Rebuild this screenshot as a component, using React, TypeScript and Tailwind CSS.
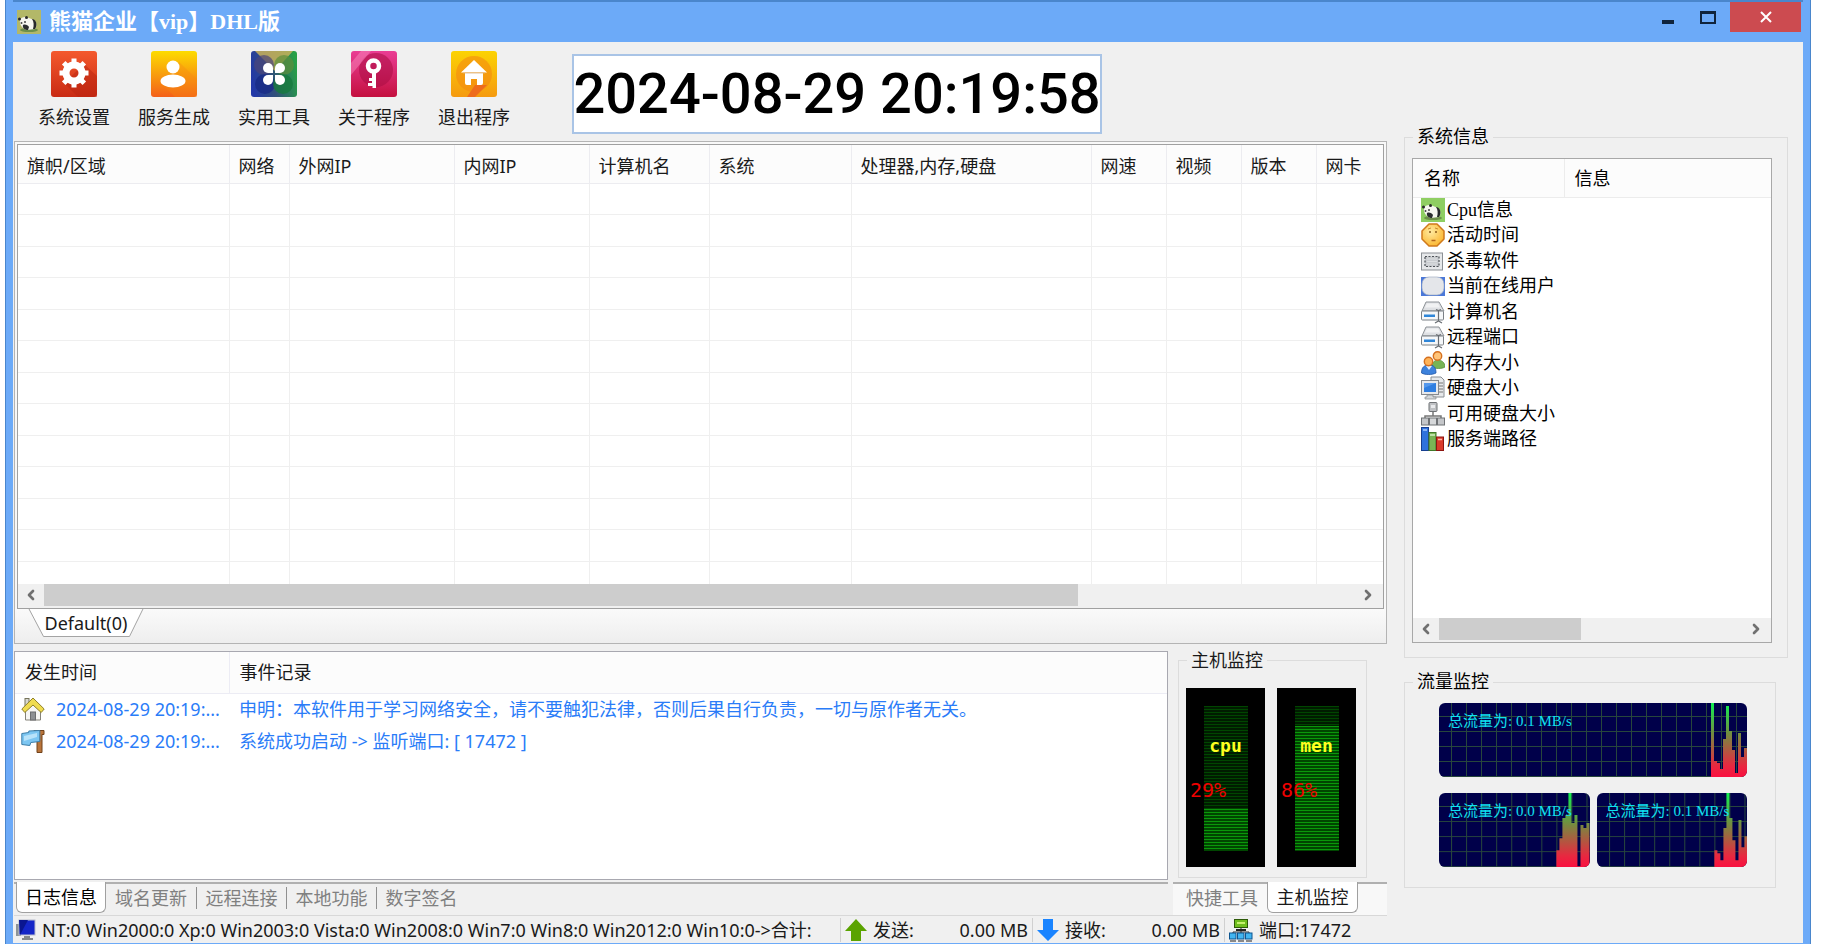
import { useState } from "react"
import type { ReactNode } from "react"
import { ChevronLeft, ChevronRight } from "lucide-react"

const columns = [
  { name: "旗帜/区域", width: "w-[211px]" },
  { name: "网络", width: "w-[60px]" },
  { name: "外网IP", width: "w-[165px]" },
  { name: "内网IP", width: "w-[135px]" },
  { name: "计算机名", width: "w-[120px]" },
  { name: "系统", width: "w-[142px]" },
  { name: "处理器,内存,硬盘", width: "w-[240px]" },
  { name: "网速", width: "w-[75px]" },
  { name: "视频", width: "w-[75px]" },
  { name: "版本", width: "w-[75px]" },
  { name: "网卡", width: "" },
]

const events = [
  { icon: <HouseIcon />, time: "2024-08-29 20:19:...", text: "申明：本软件用于学习网络安全，请不要触犯法律，否则后果自行负责，一切与原作者无关。" },
  { icon: <SignIcon />, time: "2024-08-29 20:19:...", text: "系统成功启动 -> 监听端口: [ 17472 ]" },
]

const systemInfo = [
  { icon: <PandaIcon bg="#8fce62" />, name: "Cpu信息" },
  { icon: <FaceIcon />, name: "活动时间" },
  { icon: <ChipIcon />, name: "杀毒软件" },
  { icon: <ScreenIcon />, name: "当前在线用户" },
  { icon: <DriveIcon />, name: "计算机名" },
  { icon: <DriveIcon />, name: "远程端口" },
  { icon: <UsersIcon />, name: "内存大小" },
  { icon: <ComputerIcon />, name: "硬盘大小" },
  { icon: <NetworkIcon />, name: "可用硬盘大小" },
  { icon: <BooksIcon />, name: "服务端路径" },
]

const logTabs = ["日志信息", "域名更新", "远程连接", "本地功能", "数字签名"]

/* Icons */

function PandaIcon({ bg }: { bg: string }) {
  return (
    <svg viewBox="0 0 24 24" className="size-6 shrink-0">
      <rect width="24" height="24" fill={bg} />
      <ellipse cx="12" cy="20" rx="9" ry="2" fill="#6d8f4a" />
      <path d="M3 10c1-3 6-4 9-2l5 2c3 2 3 7 1 9l-8 1c-4-1-8-5-7-10z" fill="#f6f6f0" />
      <path d="M15 9c4 0 6 6 3 10h-2c1-4 1-7-1-10z" fill="#26282a" />
      <circle cx="2.500" cy="9" r="1.500" fill="#2a2a2a" />
      <circle cx="9.500" cy="7.500" r="1.500" fill="#2a2a2a" />
      <circle cx="4.500" cy="13" r="1" fill="#444" />
      <circle cx="8" cy="12" r="1" fill="#444" />
      <path d="M6 15c2-1 5 0 6 2l-1 3c-3 0-6-2-5-5z" fill="#2b2d2f" />
    </svg>
  )
}

function FaceIcon() {
  return (
    <svg viewBox="0 0 24 24" className="size-6 shrink-0">
      <defs>
        <radialGradient id="face" cx="0.4" cy="0.35" r="0.7">
          <stop offset="0" stopColor="#ffeaa0" />
          <stop offset="1" stopColor="#fbb52d" />
        </radialGradient>
      </defs>
      <path d="M8 1h8l7 7v8l-7 7H8l-7-7V8z" fill="url(#face)" stroke="#d07a1c" strokeWidth="1.500" strokeLinejoin="round" />
      <path d="M7 6l3-1M14 5l3 1" stroke="#c98a2c" strokeWidth="1" />
      <circle cx="9" cy="9" r="1" fill="#8a5a1a" />
      <circle cx="15" cy="9" r="1" fill="#8a5a1a" />
      <path d="M10.500 17.500h4" stroke="#b5661c" strokeWidth="1.500" />
    </svg>
  )
}

function ChipIcon() {
  return (
    <svg viewBox="0 0 24 24" className="size-6 shrink-0">
      <rect x="0.500" y="4" width="21" height="17" fill="#e6e8ea" stroke="#8b9095" />
      <rect x="4" y="7.500" width="14" height="10" fill="#c9ccd0" stroke="#4e5358" strokeWidth="1.200" strokeDasharray="2 1.500" />
      <path d="M6 10h10M6 12.500h10M6 15h10" stroke="#e2e4e6" strokeWidth="0.800" />
    </svg>
  )
}

function ScreenIcon() {
  return (
    <svg viewBox="0 0 24 24" className="size-6 shrink-0">
      <rect y="3" width="24" height="19" fill="#4b78d8" />
      <rect x="1" y="3" width="22" height="18" rx="7" fill="#e4e6ea" stroke="#a5b0c4" strokeWidth="0.700" />
    </svg>
  )
}

function DriveIcon() {
  return (
    <svg viewBox="0 0 24 24" className="size-6 shrink-0">
      <path d="M5 2h13l5 9H1z" fill="#dfe1e4" stroke="#8e9398" />
      <path d="M6 3.500h11l2 4H4z" fill="#f1f2f3" />
      <rect x="0.500" y="11" width="22" height="9" rx="1" fill="#f5f7f9" stroke="#7b8085" />
      <rect x="3" y="14.500" width="11" height="2.500" fill="#2f86d8" />
      <path d="M17.500 10v11M15 9.500l2.500 1 2.500-1M14 23l3.500-2 3.500 2" fill="none" stroke="#6a6f74" strokeWidth="1.200" />
    </svg>
  )
}

function UsersIcon() {
  return (
    <svg viewBox="0 0 24 24" className="size-6 shrink-0">
      <path d="M11 16c0-5 3-7 6-7s7 2 7 7c-3 2-10 2-13 0z" fill="#77b455" stroke="#4f8a35" strokeWidth="0.700" />
      <circle cx="16.500" cy="5" r="4.200" fill="#ffc479" stroke="#d5701f" strokeWidth="1.400" />
      <path d="M0.500 22c0-6 3-8 7.500-8s7 2 7 8c-4 2-11 2-14.500 0z" fill="#3d82dc" stroke="#2257a6" strokeWidth="0.800" />
      <path d="M5 15l3 4 3-4z" fill="#e4eefc" />
      <circle cx="7.500" cy="10.500" r="4.200" fill="#ffb459" stroke="#d5701f" strokeWidth="1.400" />
    </svg>
  )
}

function ComputerIcon() {
  return (
    <svg viewBox="0 0 24 24" className="size-6 shrink-0">
      <path d="M10 1h10l3 3v17H10z" fill="#e6e8ea" stroke="#8a8f94" />
      <path d="M18 7h4M18 10h4M18 13h4M18 16h4" stroke="#777" />
      <rect x="0.500" y="4.500" width="17" height="14" fill="#e7e9ec" stroke="#85898e" />
      <rect x="3" y="7" width="12" height="9" fill="#2f7ee0" />
      <path d="M3 7h12L3 12z" fill="#5498ec" />
      <path d="M6 19h6v2h3v2H4v-2h2z" fill="#d5d8db" stroke="#85898e" strokeWidth="0.700" />
    </svg>
  )
}

function NetworkIcon() {
  return (
    <svg viewBox="0 0 24 24" className="size-6 shrink-0">
      <path d="M12 10v4M4 17v-3h16v3" fill="none" stroke="#777" strokeWidth="1.500" />
      <rect x="8" y="0.500" width="8" height="9" rx="1" fill="#bfc1c4" stroke="#6f7275" />
      <rect x="10" y="3" width="4" height="3" fill="#e9eaec" />
      <rect x="0.500" y="16" width="7" height="7" fill="#c4c6c9" stroke="#6f7275" />
      <rect x="8.500" y="16" width="7" height="7" fill="#d6d8da" stroke="#6f7275" />
      <rect x="16.500" y="16" width="7" height="7" fill="#c4c6c9" stroke="#6f7275" />
    </svg>
  )
}

function BooksIcon() {
  return (
    <svg viewBox="0 0 24 24" className="size-6 shrink-0">
      <rect x="0.500" y="0.500" width="7" height="23" fill="#2f72dd" stroke="#173f90" />
      <path d="M2 3h4" stroke="#a9cbff" strokeWidth="1.500" />
      <rect x="8" y="5.500" width="7" height="18" fill="#79b455" stroke="#41792a" />
      <path d="M9 8h5" stroke="#d6f0c4" strokeWidth="1.500" />
      <rect x="15.500" y="10" width="7" height="13.500" fill="#d93a2b" stroke="#8c1510" />
      <path d="M17 12.500h4" stroke="#ffb9a8" strokeWidth="1.500" />
    </svg>
  )
}

function HouseIcon() {
  return (
    <svg viewBox="0 0 24 24" className="size-6 shrink-0">
      <rect x="4" y="1.500" width="4" height="8" fill="#d8d8d0" stroke="#77745c" />
      <path d="M4.500 12v11h15V12L12 5z" fill="#f6f6f4" stroke="#85837a" />
      <path d="M12 1L0.800 12l3 3.500L12 8l8.200 7.500 3-3.500z" fill="#f0dc50" stroke="#90802a" />
      <rect x="9.500" y="15" width="5" height="8" fill="#8d9094" stroke="#6b6d70" />
    </svg>
  )
}

function SignIcon() {
  return (
    <svg viewBox="0 0 24 24" className="size-6 shrink-0">
      <path d="M13 1.500h10v4h-2v18h-5V8z" fill="#b9743a" stroke="#71421b" />
      <path d="M0.800 4.500l7-1V2l11-0.500v11l-9 1-1 3-8-1z" fill="#7cc6f2" stroke="#3b7da8" />
      <path d="M3 7l13-3v4L3 12z" fill="#b8e3fa" />
    </svg>
  )
}

function GearTile() {
  return (
    <svg viewBox="0 0 46 46" className="size-[46px]">
      <defs>
        <linearGradient id="gear" x1="0" y1="0" x2="0" y2="1">
          <stop offset="0" stopColor="#f4592d" />
          <stop offset="1" stopColor="#c92b14" />
        </linearGradient>
      </defs>
      <rect width="46" height="46" rx="3" fill="url(#gear)" />
      <path d="M33 13l13 12v21H27L13 32z" fill="#b7230f" opacity="0.450" />
      <circle cx="23" cy="22" r="8" fill="none" stroke="#fff" strokeWidth="7" />
      <g stroke="#fff" strokeWidth="5">
        <path d="M23 7.500v6M23 30.500v6M8.500 22h6M31.500 22h6M12.700 11.700l4 4M29.300 28.300l4 4M33.300 11.700l-4 4M16.700 28.300l-4 4" />
      </g>
    </svg>
  )
}

function UserTile() {
  return (
    <svg viewBox="0 0 46 46" className="size-[46px]">
      <defs>
        <linearGradient id="user" x1="0" y1="0" x2="0" y2="1">
          <stop offset="0" stopColor="#fddc00" />
          <stop offset="1" stopColor="#f4601a" />
        </linearGradient>
      </defs>
      <rect width="46" height="46" rx="3" fill="url(#user)" />
      <path d="M28 11l18 17v18H24L12 34z" fill="#f58a10" opacity="0.350" />
      <circle cx="22" cy="16" r="6.500" fill="#fff" />
      <ellipse cx="22" cy="30" rx="12.500" ry="6.500" fill="#fff" />
    </svg>
  )
}

function CloverTile() {
  return (
    <svg viewBox="0 0 46 46" className="size-[46px]">
      <defs>
        <linearGradient id="clover" x1="0" y1="0.600" x2="1" y2="0.400">
          <stop offset="0" stopColor="#2238a8" />
          <stop offset="0.450" stopColor="#31507a" />
          <stop offset="1" stopColor="#27a046" />
        </linearGradient>
      </defs>
      <rect width="46" height="46" rx="3" fill="url(#clover)" />
      <path d="M4 0h38L24 20z" fill="#c9b25a" opacity="0.850" />
      <circle cx="13" cy="14" r="10" fill="#4a4479" opacity="0.700" />
      <circle cx="33" cy="14" r="10" fill="#5c8f3b" opacity="0.700" />
      <circle cx="14" cy="33" r="10" fill="#182a86" opacity="0.800" />
      <circle cx="32" cy="33" r="10" fill="#177a3c" opacity="0.800" />
      <g fill="#fff">
        <path d="M22 22h-5a5 5 0 1 1 5-5z" />
        <path d="M24 22h5a5 5 0 1 0-5-5z" />
        <path d="M22 24h-5a5 5 0 1 0 5 5z" />
        <path d="M24 24h5a5 5 0 1 1-5 5z" />
      </g>
    </svg>
  )
}

function KeyTile() {
  return (
    <svg viewBox="0 0 46 46" className="size-[46px]">
      <defs>
        <linearGradient id="key" x1="0" y1="0" x2="0" y2="1">
          <stop offset="0" stopColor="#ea3d94" />
          <stop offset="1" stopColor="#c4103f" />
        </linearGradient>
      </defs>
      <rect width="46" height="46" rx="3" fill="url(#key)" />
      <circle cx="25" cy="19" r="17" fill="#a90c44" opacity="0.550" />
      <path d="M10 0h10L0 24V12z" fill="#f887bb" opacity="0.500" />
      <circle cx="22.500" cy="15" r="5.500" fill="none" stroke="#fff" strokeWidth="4.500" />
      <path d="M21 21h4v16h-3.500v-2H17v-3h4v-2h-3v-3h3z" fill="#fff" />
    </svg>
  )
}

function HomeTile() {
  return (
    <svg viewBox="0 0 46 46" className="size-[46px]">
      <defs>
        <linearGradient id="home" x1="0" y1="0" x2="0" y2="1">
          <stop offset="0" stopColor="#fcd303" />
          <stop offset="1" stopColor="#f59a10" />
        </linearGradient>
      </defs>
      <rect width="46" height="46" rx="3" fill="url(#home)" />
      <circle cx="23" cy="23" r="18" fill="#f48a10" opacity="0.600" />
      <path d="M16 46l8-12h12L24 46z" fill="#ee6c1c" />
      <path d="M23 9l13 12.500H10z" fill="#fff" />
      <path d="M14 22h18v10q0 2-2 2h-4v-6h-6v6h-4q-2 0-2-2z" fill="#fff" />
      <path d="M12 22h22" stroke="#d9b183" strokeWidth="0.800" />
    </svg>
  )
}

/* Shared parts */

function ScrollBar({ thumb }: { thumb: string }) {
  return (
    <div className="flex h-6 shrink-0 items-start bg-[#f0f0f0]">
      <button aria-label="向左" className="flex h-[22px] w-[26px] shrink-0 items-center justify-center text-[#707070]">
        <ChevronLeft className="size-4" strokeWidth={4} />
      </button>
      <div className="h-[22px] flex-1">
        <div className={`h-full bg-[#cdcdcd] ${thumb}`} />
      </div>
      <button aria-label="向右" className="flex h-[22px] w-[30px] shrink-0 items-center justify-center text-[#707070]">
        <ChevronRight className="size-4" strokeWidth={4} />
      </button>
    </div>
  )
}

function Group({ title, className, children }: { title: string; className: string; children: ReactNode }) {
  return (
    <fieldset className={`min-w-0 border border-[#dcdcdc] ${className}`}>
      <legend className="ml-2 px-1 leading-6">{title}</legend>
      {children}
    </fieldset>
  )
}

function Meter({ label, value }: { label: string; value: number }) {
  const height = `${value}%`
  return (
    <div className="relative flex h-[179px] w-[79px] justify-center bg-black pt-[18px] pb-4 font-['DejaVu_Sans_Mono','Liberation_Mono',monospace] font-bold">
      <div className="flex w-11 flex-col justify-end bg-[repeating-linear-gradient(#004600_0_1px,#001c00_1px_3px)]">
        <div className="bg-[repeating-linear-gradient(#0a980a_0_1px,#004600_1px_3px)]" style={{ height }} />
      </div>
      <span className="absolute inset-x-0 top-[46px] text-center text-lg leading-6 text-[#ffff20]">{label}</span>
      <span className="absolute top-[90px] left-1 text-xl leading-6 font-normal text-[#ee0000]">{value}%</span>
    </div>
  )
}

// tops: distance of each 3px bar from the upper edge, right aligned
function TrafficChart({ id, width, total, tops }: { id: string; width: number; total: string; tops: number[] }) {
  const start = width - tops.length * 3
  const outline = tops.map((top, i) => `V${top}H${start + (i + 1) * 3}`).join("")
  return (
    <div className="relative overflow-hidden rounded-md bg-[#00004a]">
      <svg viewBox={`0 0 ${width} 74`} className="block w-full">
        <defs>
          <linearGradient id={id} gradientUnits="userSpaceOnUse" x1="0" y1="0" x2="0" y2="74">
            <stop offset="0" stopColor="#10f050" />
            <stop offset="0.400" stopColor="#6f9040" />
            <stop offset="0.850" stopColor="#e82840" />
            <stop offset="1" stopColor="#fa1040" />
          </linearGradient>
          <pattern id={`${id}-grid`} width="15" height="15" x="12" y="13" patternUnits="userSpaceOnUse">
            <path d="M0.500 0v15M0 0.500h15" stroke="#27463c" strokeWidth="1" />
          </pattern>
        </defs>
        <rect width={width} height="74" fill={`url(#${id}-grid)`} />
        <path d={`M${start} 74${outline}V74z`} fill={`url(#${id})`} />
      </svg>
      <span className="absolute top-1.5 left-[9px] font-['Liberation_Serif','Noto_Sans_CJK_SC',serif] text-[15px] leading-6 whitespace-nowrap text-[#10e0f0]">
        总流量为: {total} MB/s
      </span>
    </div>
  )
}

function ToolButton({ icon, label }: { icon: ReactNode; label: string }) {
  return (
    <button className="flex w-[100px] flex-col items-center gap-2">
      {icon}
      <span className="leading-6">{label}</span>
    </button>
  )
}

/* Panels */

function TitleBar() {
  return (
    <header className="flex h-[42px] shrink-0 border-t-2 border-[#4a86cc] pr-0.5">
      <div className="flex flex-1 items-center gap-2 pl-1">
        <PandaIcon bg="#b3b868" />
        <h1 className="font-['Liberation_Serif','Noto_Sans_CJK_SC',serif] text-[22px] leading-8 font-bold text-white">
          熊猫企业【vip】DHL版
        </h1>
      </div>
      <div className="flex h-[30px]">
        <button aria-label="最小化" className="flex w-10 items-end justify-center pb-2">
          <span className="h-1 w-3 bg-[#10243c]" />
        </button>
        <button aria-label="最大化" className="flex w-10 items-center justify-center">
          <span className="h-[13px] w-4 border-2 border-t-[3px] border-[#10243c]" />
        </button>
        <button aria-label="关闭" className="ml-0.5 flex w-[71px] items-center justify-center bg-[#cc4b50] text-white">
          <svg viewBox="0 0 12 12" className="size-3">
            <path d="M1 1l10 10M11 1L1 11" stroke="currentColor" strokeWidth="2" />
          </svg>
        </button>
      </div>
    </header>
  )
}

function ToolBar() {
  return (
    <div className="flex h-[99px] shrink-0 items-start pt-[9px]">
      <nav className="ml-[10px] flex">
        <ToolButton icon={<GearTile />} label="系统设置" />
        <ToolButton icon={<UserTile />} label="服务生成" />
        <ToolButton icon={<CloverTile />} label="实用工具" />
        <ToolButton icon={<KeyTile />} label="关于程序" />
        <ToolButton icon={<HomeTile />} label="退出程序" />
      </nav>
      <div className="mt-[3px] ml-12 flex h-20 w-[530px] items-center justify-center border-2 border-[#a9c4e6] bg-white">
        <time className="font-[Roboto,'Liberation_Sans',sans-serif] text-[56px] leading-none font-medium whitespace-nowrap text-black">
          2024-08-29 20:19:58
        </time>
      </div>
    </div>
  )
}

function HostTable() {
  return (
    <section className="flex min-h-0 flex-1 flex-col border border-[#b4b4b4] bg-[#f8f8f8]">
      <div className="mx-[2px] mt-[2px] flex min-h-0 flex-1 flex-col border border-[#a0a0a0] bg-white">
        <div className="min-h-0 flex-1 overflow-hidden">
          <table className="w-full table-fixed border-collapse">
            <thead>
              <tr className="h-[38px]">
                {columns.map((c) => (
                  <th key={c.name} className={`${c.width} border-r border-b border-[#ececf0] bg-[#fcfcfc] pt-1 pl-[9px] text-left font-normal whitespace-nowrap last:border-r-0`}>
                    {c.name}
                  </th>
                ))}
              </tr>
            </thead>
            <tbody>
              {Array.from({ length: 13 }, (_, row) => (
                <tr key={row} className="odd:h-[31px] even:h-8">
                  {columns.map((c) => (
                    <td key={c.name} className="border-r border-b border-[#efefef] last:border-r-0" />
                  ))}
                </tr>
              ))}
            </tbody>
          </table>
        </div>
        <ScrollBar thumb="w-[79%]" />
      </div>
      <div className="flex h-[34px] shrink-0 bg-linear-to-b from-[#fafafa] to-[#eeeeee]">
        <button className="relative ml-[12px] h-[28px] w-[118px] leading-6">
          <svg viewBox="0 0 118 29" className="absolute inset-0 h-full w-full">
            <path d="M0 0l15 28.500h89L118 0" fill="#fff" stroke="#a0a0a0" />
          </svg>
          <span className="relative">Default(0)</span>
        </button>
      </div>
    </section>
  )
}

function EventLog() {
  const [active, setActive] = useState(0)
  return (
    <section className="flex min-w-0 flex-1 flex-col pt-[3px]">
      <div className="h-[229px] border border-[#a8a8b0] bg-white">
        <table className="w-full table-fixed border-collapse">
          <thead>
            <tr className="h-[41px]">
              <th className="w-[214px] border-r border-b border-[#ececf4] bg-[#fcfcfc] pl-[10px] text-left font-normal">发生时间</th>
              <th className="border-b border-[#ececf4] bg-[#fcfcfc] pl-[10px] text-left font-normal">事件记录</th>
            </tr>
          </thead>
          <tbody className="text-[#2a7cf8]">
            {events.map((e) => (
              <tr key={e.text} className="h-8">
                <td className="pl-[6px]">
                  <div className="flex items-center gap-[11px] whitespace-nowrap">
                    {e.icon}
                    {e.time}
                  </div>
                </td>
                <td className="truncate pl-[10px]">{e.text}</td>
              </tr>
            ))}
          </tbody>
        </table>
      </div>
      <div className="mt-[2px] flex h-[33px] items-start border-t-2 border-[#b0b0b0]">
        {logTabs.map((tab, i) => (
          <button
            key={tab}
            onClick={() => setActive(i)}
            className={
              i === active
                ? "-mt-0.5 ml-0.5 h-[31px] w-[90px] rounded-b-md border border-t-0 border-[#a0a0a0] bg-white text-black"
                : "mt-[3px] h-[22px] w-[90px] border-l border-[#909090] leading-[22px] text-[#808080] nth-2:border-l-0"
            }
          >
            {tab}
          </button>
        ))}
      </div>
    </section>
  )
}

function HostMonitor() {
  return (
    <section className="flex w-[214px] shrink-0 flex-col">
      <Group title="主机监控" className="ml-[5px] h-[230px] w-[189px]">
        <div className="flex gap-3 pt-4 pl-[7px]">
          <Meter label="cpu" value={29} />
          <Meter label="men" value={86} />
        </div>
      </Group>
      <div className="mt-[4px] flex h-[33px] items-start border-t-2 border-[#b0b0b0] bg-[#f8f8f8]">
        <button className="mt-[3px] ml-1 h-[22px] w-[90px] leading-[22px] text-[#808080]">快捷工具</button>
        <button className="-mt-0.5 h-[31px] w-[91px] rounded-b-md border border-t-0 border-[#a0a0a0] bg-white">主机监控</button>
      </div>
    </section>
  )
}

function StatusBar() {
  return (
    <footer className="flex h-7 shrink-0 items-center border-t border-[#d8d8d8] pt-px pl-0.5 leading-6 whitespace-nowrap">
      <div className="flex w-[824px] items-center gap-1.5">
        <svg viewBox="0 0 20 24" className="h-6 w-5 shrink-0">
          <path d="M0 6h5v12H0z" fill="#8d9498" />
          <rect x="3" y="2" width="16" height="15" fill="#1426c8" stroke="#b8bccc" />
          <path d="M3 2h9L4 17z" fill="#0a1690" />
          <path d="M8 18h6v2h3v2H6v-2h2z" fill="#85898c" />
        </svg>
        <span>NT:0 Win2000:0 Xp:0 Win2003:0 Vista:0 Win2008:0 Win7:0 Win8:0 Win2012:0 Win10:0-&gt;合计:</span>
      </div>
      <div className="flex w-48 items-center gap-1.5 border-l border-[#d0d0d0] pr-1 pl-1">
        <svg viewBox="0 0 22 22" className="size-[22px] shrink-0">
          <path d="M11 0l11 12h-6v10H6V12H0z" fill="#5aa300" />
        </svg>
        <span className="flex-1">发送:</span>
        <span>0.00 MB</span>
      </div>
      <div className="flex w-48 items-center gap-1.5 border-l border-[#d0d0d0] pr-1 pl-1">
        <svg viewBox="0 0 22 22" className="size-[22px] shrink-0">
          <path d="M11 22L0 11h6V0h10v11h6z" fill="#1a84ff" />
        </svg>
        <span className="flex-1">接收:</span>
        <span>0.00 MB</span>
      </div>
      <div className="flex items-center gap-1.5 border-l border-[#d0d0d0] pl-1">
        <svg viewBox="0 0 24 24" className="size-6 shrink-0">
          <path d="M12 10v5M4 17v-3h16v3" stroke="#333" fill="none" />
          <rect x="5.500" y="1.500" width="13" height="8" fill="#6fbe1e" stroke="#2d5a08" />
          <path d="M8 4h8v2H8z" fill="#c6f06e" />
          <path d="M7 12h10" stroke="#222" strokeWidth="2" />
          <rect x="0.500" y="15" width="6.500" height="6" fill="#42b4f0" stroke="#0d5590" />
          <rect x="8.500" y="15" width="6.500" height="6" fill="#42b4f0" stroke="#0d5590" />
          <rect x="16.500" y="15" width="6.500" height="6" fill="#42b4f0" stroke="#0d5590" />
          <path d="M1 23h6M9 23h6M17 23h6" stroke="#222" />
        </svg>
        <span>端口:17472</span>
      </div>
    </footer>
  )
}

function SideColumn() {
  return (
    <aside className="flex w-[384px] shrink-0 flex-col pt-[83px] pb-[55px] font-['Liberation_Serif','Noto_Sans_CJK_SC',serif] text-black">
      <Group title="系统信息" className="flex min-h-0 flex-1 flex-col">
        <div className="mt-[9px] mr-[15px] mb-[14px] ml-[7px] flex min-h-0 flex-1 flex-col border border-[#a8a8a8] bg-white">
          <div className="min-h-0 flex-1 overflow-hidden">
            <table className="w-full table-fixed border-collapse">
              <thead>
                <tr className="h-[38px]">
                  <th className="w-[151px] border-r border-b border-[#ececec] bg-[#fcfcfc] pt-[3px] pl-[11px] text-left font-normal">名称</th>
                  <th className="border-b border-[#ececec] bg-[#fcfcfc] pt-[3px] pl-[10px] text-left font-normal">信息</th>
                </tr>
              </thead>
              <tbody>
                {systemInfo.map((item) => (
                  <tr key={item.name} className="odd:h-[25px] even:h-[26px]">
                    <td className="pl-2 leading-6">
                      <div className="flex items-center gap-[2px] whitespace-nowrap">
                        {item.icon}
                        {item.name}
                      </div>
                    </td>
                    <td />
                  </tr>
                ))}
              </tbody>
            </table>
          </div>
          <ScrollBar thumb="w-[47%]" />
        </div>
      </Group>
      <Group title="流量监控" className="mt-3 mr-3 h-[218px]">
        <div className="mr-7 ml-[34px] grid grid-cols-2 gap-x-[7px] gap-y-4 pt-[9px]">
          <div className="col-span-2">
            <TrafficChart id="total" width={308} total="0.1" tops={[0, 58, 60, 66, 36, 3, 28, 47, 70, 30, 54, 45]} />
          </div>
          <TrafficChart id="sent" width={150} total="0.0" tops={[57, 45, 25, 22, 0, 30, 22, 73, 32, 35, 30]} />
          <TrafficChart id="received" width={150} total="0.1" tops={[57, 60, 67, 35, 0, 25, 47, 67, 27, 54, 43]} />
        </div>
      </Group>
    </aside>
  )
}

export default function App() {
  return (
    <div className="h-screen bg-white pr-[10px] pl-[5px] font-['Noto_Sans','Noto_Sans_CJK_SC',sans-serif] text-[18px] leading-6 text-[#1a1a1a]">
      <div className="flex h-full flex-col border-x border-[#4a86cc] bg-[#6caaf8] px-[7px] pb-px">
        <TitleBar />
        <div className="flex min-h-0 flex-1 gap-[17px] bg-[#f0f0f0] pr-[15px] pl-px">
          <main className="flex min-w-0 flex-1 flex-col">
            <ToolBar />
            <HostTable />
            <div className="mt-1 flex shrink-0 gap-[5px]">
              <EventLog />
              <HostMonitor />
            </div>
            <StatusBar />
          </main>
          <SideColumn />
        </div>
      </div>
    </div>
  )
}
